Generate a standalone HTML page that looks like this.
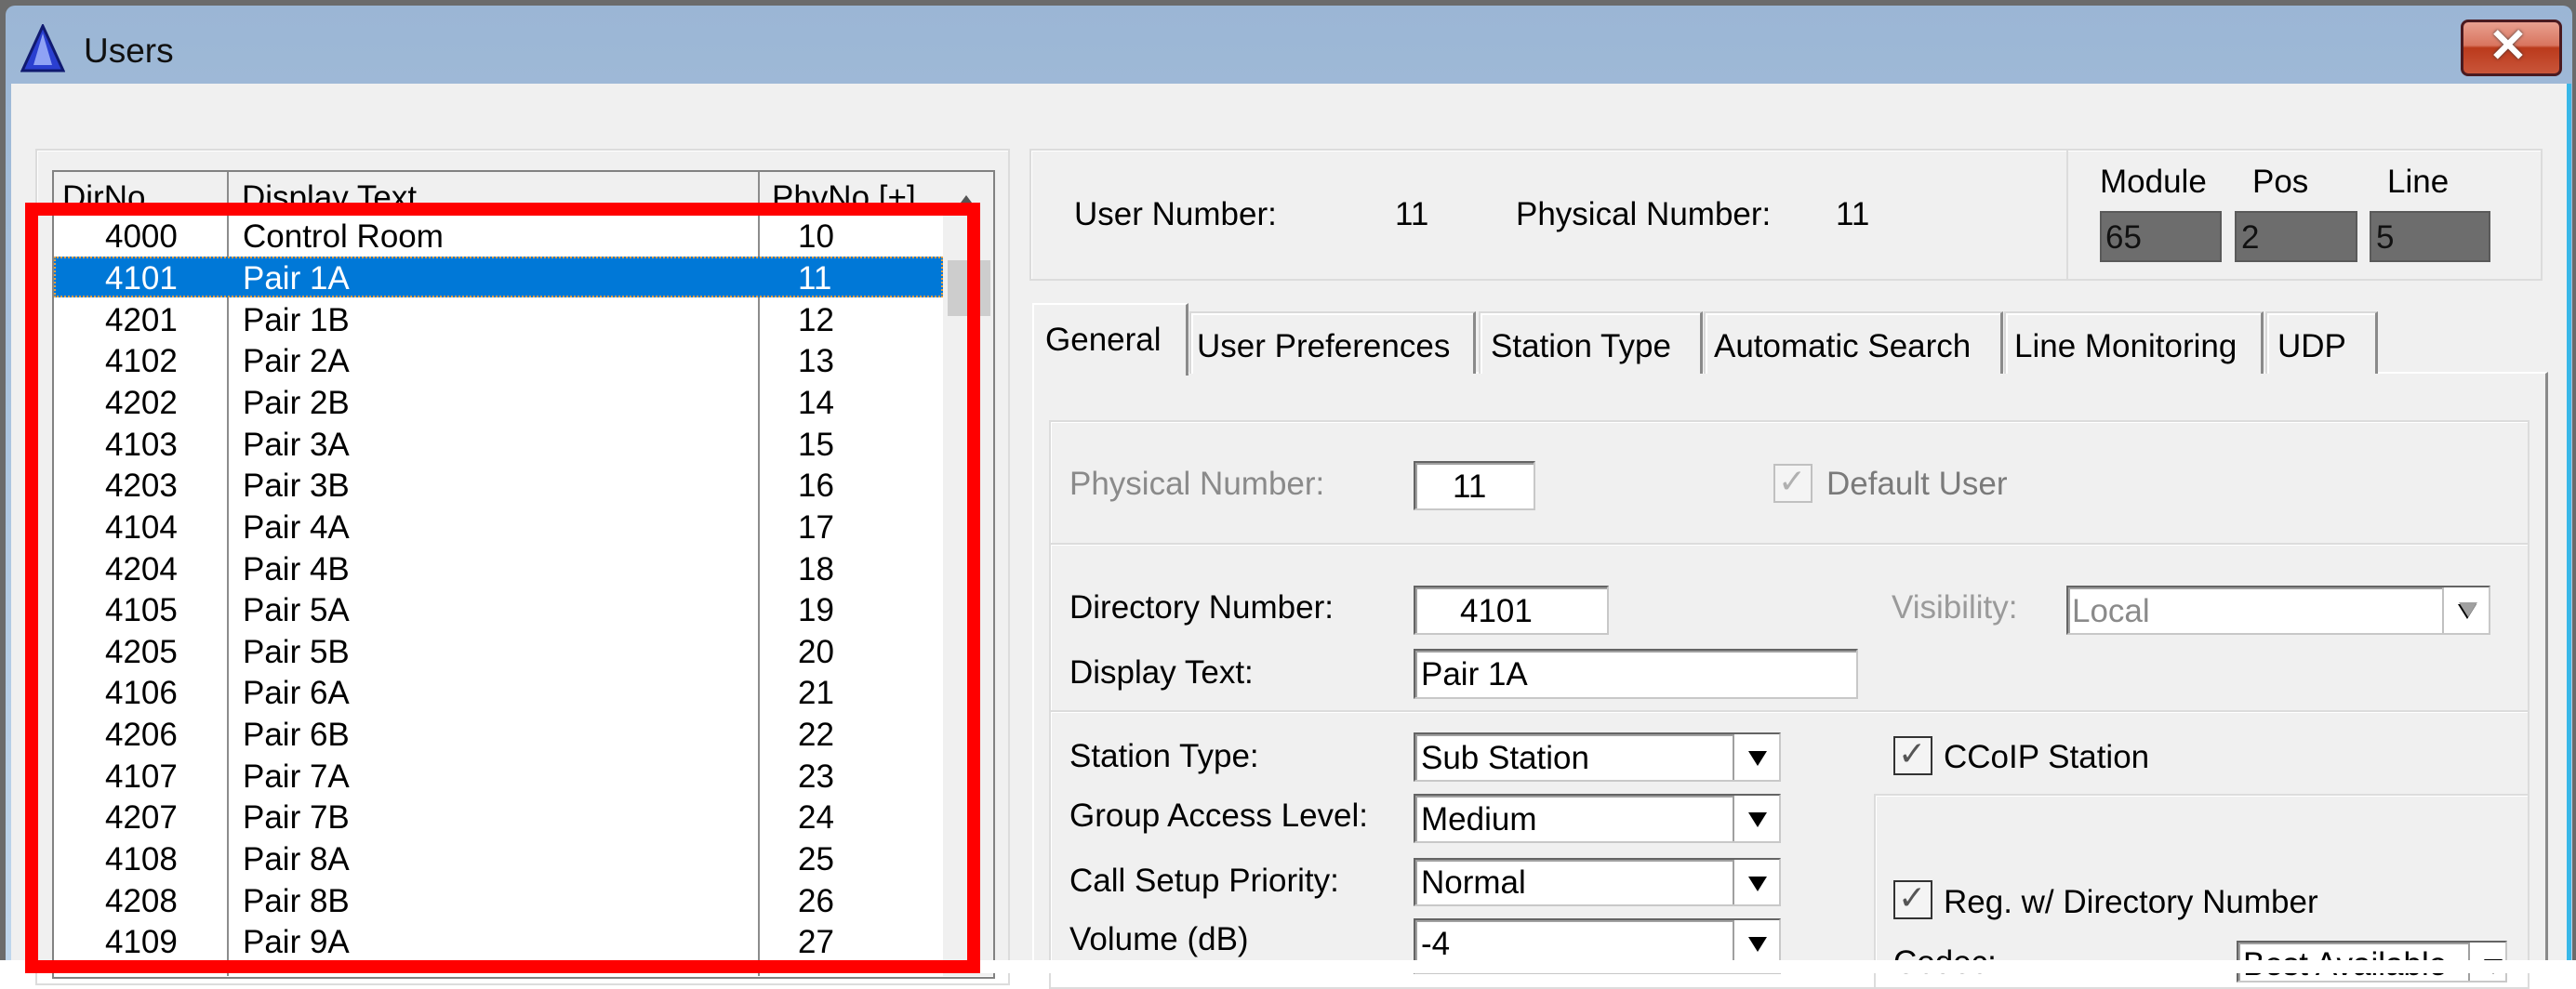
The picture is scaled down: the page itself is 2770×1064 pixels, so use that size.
<!DOCTYPE html>
<html><head><meta charset="utf-8"><style>
*{margin:0;padding:0;box-sizing:border-box}
body{width:2770px;height:1047px;position:relative;overflow:hidden;background:#fff;font-family:"Liberation Sans",sans-serif;font-size:35px;color:#000}
.a{position:absolute}
.t{position:absolute;white-space:nowrap;line-height:1}
.gb{position:absolute;border:2px solid #dcdcdc;box-shadow:inset 1px 1px 0 #fff}
.box{position:absolute;background:#fff;border:2px solid #646464;border-right-color:#c8c8c8;border-bottom-color:#c8c8c8;box-shadow:inset 2px 2px 0 #a0a0a0}
.arr{position:absolute;top:0;bottom:0;right:0;width:50px;border-left:2px solid #a0a0a0;background:#fff}
.arr:after{content:"";position:absolute;left:15px;top:18px;border-left:10px solid transparent;border-right:10px solid transparent;border-top:16px solid #000}
.chk{position:absolute;width:42px;height:42px;border:2px solid #333;background:#f4f4f4}
.tab{position:absolute;top:335px;height:67px;border:2px solid #d9d9d9;border-bottom:none;border-right:3px solid #8a8a8a;background:#f0f0f0;box-shadow:inset 2px 2px 0 #fff}
.row{position:absolute;left:58px;width:956px;height:45px}
.row span{position:absolute;top:6px;line-height:1}
.row span:nth-child(3){left:800px!important}
</style></head><body>
<div class="a" style="left:0;top:0;width:2770px;height:1033px;background:#6b6b6b"></div>
<div class="a" style="left:6px;top:6px;width:2760px;height:1027px;background:linear-gradient(#9bb6d5,#bfd6ec);border-radius:10px 10px 0 0"></div>
<div class="a" style="left:12px;top:90px;width:2752px;height:943px;background:#f0f0f0"></div>
<div class="a" style="left:2760px;top:90px;width:5px;height:943px;background:#38b8e8"></div>
<svg class="a" style="left:22px;top:26px" width="48" height="54"><polygon points="24,2 46,50 2,50" fill="#2a3fd0" stroke="#101a70" stroke-width="3"/><polygon points="24,10 34,44 14,44" fill="#8fa2f5"/></svg>
<div class="t" style="left:90px;top:36px;font-size:37px;color:#111">Users</div>
<div class="a" style="left:2646px;top:21px;width:109px;height:61px;border:3px solid #4a1a20;border-radius:8px;background:linear-gradient(#e8a090 0%,#d9755f 45%,#bb3a1c 50%,#c9553a 100%)"></div>
<div class="t" style="left:2676px;top:24px;font-size:50px;font-weight:bold;color:#fff;text-shadow:0 0 3px #333">✕</div>
<div class="gb" style="left:38px;top:160px;width:1048px;height:900px"></div>
<div class="a" style="left:56px;top:183px;width:1014px;height:870px;background:#fff;border:2px solid #828282"></div>
<div class="a" style="left:58px;top:185px;width:1010px;height:45px;background:#f0f0f0"></div>
<div class="a" style="left:1014px;top:230px;width:54px;height:820px;background:#f0f0f0"></div>
<div class="a" style="left:1019px;top:280px;width:46px;height:60px;background:#cdcdcd"></div>
<div class="t" style="left:67px;top:195px">DirNo</div>
<div class="t" style="left:260px;top:195px">Display Text</div>
<div class="t" style="left:830px;top:195px">PhyNo [+]</div>
<div class="a" style="left:1030px;top:210px;border-left:9px solid transparent;border-right:9px solid transparent;border-bottom:12px solid #555"></div>
<div class="a" style="left:244px;top:185px;width:2px;height:865px;background:#8c8c8c"></div>
<div class="a" style="left:815px;top:185px;width:2px;height:865px;background:#8c8c8c"></div>
<div class="a" style="left:58px;top:276px;width:956px;height:44px;background:#0078d7;border:2px dotted #e8a040"></div>
<div class="row" style="top:231px"><span style="left:55px">4000</span><span style="left:203px">Control Room</span><span>10</span></div>
<div class="row" style="top:276px;color:#fff"><span style="left:55px">4101</span><span style="left:203px">Pair 1A</span><span>11</span></div>
<div class="row" style="top:321px"><span style="left:55px">4201</span><span style="left:203px">Pair 1B</span><span>12</span></div>
<div class="row" style="top:365px"><span style="left:55px">4102</span><span style="left:203px">Pair 2A</span><span>13</span></div>
<div class="row" style="top:410px"><span style="left:55px">4202</span><span style="left:203px">Pair 2B</span><span>14</span></div>
<div class="row" style="top:455px"><span style="left:55px">4103</span><span style="left:203px">Pair 3A</span><span>15</span></div>
<div class="row" style="top:499px"><span style="left:55px">4203</span><span style="left:203px">Pair 3B</span><span>16</span></div>
<div class="row" style="top:544px"><span style="left:55px">4104</span><span style="left:203px">Pair 4A</span><span>17</span></div>
<div class="row" style="top:589px"><span style="left:55px">4204</span><span style="left:203px">Pair 4B</span><span>18</span></div>
<div class="row" style="top:633px"><span style="left:55px">4105</span><span style="left:203px">Pair 5A</span><span>19</span></div>
<div class="row" style="top:678px"><span style="left:55px">4205</span><span style="left:203px">Pair 5B</span><span>20</span></div>
<div class="row" style="top:722px"><span style="left:55px">4106</span><span style="left:203px">Pair 6A</span><span>21</span></div>
<div class="row" style="top:767px"><span style="left:55px">4206</span><span style="left:203px">Pair 6B</span><span>22</span></div>
<div class="row" style="top:812px"><span style="left:55px">4107</span><span style="left:203px">Pair 7A</span><span>23</span></div>
<div class="row" style="top:856px"><span style="left:55px">4207</span><span style="left:203px">Pair 7B</span><span>24</span></div>
<div class="row" style="top:901px"><span style="left:55px">4108</span><span style="left:203px">Pair 8A</span><span>25</span></div>
<div class="row" style="top:946px"><span style="left:55px">4208</span><span style="left:203px">Pair 8B</span><span>26</span></div>
<div class="row" style="top:990px"><span style="left:55px">4109</span><span style="left:203px">Pair 9A</span><span>27</span></div>
<div class="gb" style="left:1107px;top:160px;width:1627px;height:142px"></div>
<div class="a" style="left:2222px;top:162px;width:2px;height:138px;background:#dcdcdc"></div>
<div class="t" style="left:1155px;top:213px">User Number:</div>
<div class="t" style="left:1500px;top:213px">11</div>
<div class="t" style="left:1630px;top:213px">Physical Number:</div>
<div class="t" style="left:1974px;top:213px">11</div>
<div class="t" style="left:2258px;top:178px">Module</div>
<div class="t" style="left:2422px;top:178px">Pos</div>
<div class="t" style="left:2567px;top:178px">Line</div>
<div class="a" style="left:2258px;top:227px;width:131px;height:55px;background:#6d6d6d;border:2px solid #5a5a5a"></div>
<div class="a" style="left:2403px;top:227px;width:132px;height:55px;background:#6d6d6d;border:2px solid #5a5a5a"></div>
<div class="a" style="left:2548px;top:227px;width:130px;height:55px;background:#6d6d6d;border:2px solid #5a5a5a"></div>
<div class="t" style="left:2264px;top:238px;color:#111">65</div>
<div class="t" style="left:2410px;top:238px;color:#111">2</div>
<div class="t" style="left:2555px;top:238px;color:#111">5</div>
<div class="a" style="left:1110px;top:400px;width:1630px;height:640px;border:2px solid #fff;border-right:3px solid #8a8a8a;border-bottom:none"></div>
<div class="tab" style="left:1279px;width:308px"></div>
<div class="tab" style="left:1590px;width:241px"></div>
<div class="tab" style="left:1832px;width:322px"></div>
<div class="tab" style="left:2155px;width:279px"></div>
<div class="tab" style="left:2436px;width:121px"></div>
<div class="a" style="left:1110px;top:326px;width:168px;height:78px;background:#f0f0f0;border:2px solid #fff;border-right:3px solid #8a8a8a;border-bottom:none"></div>
<div class="t" style="left:1124px;top:348px">General</div>
<div class="t" style="left:1287px;top:355px">User Preferences</div>
<div class="t" style="left:1603px;top:355px">Station Type</div>
<div class="t" style="left:1843px;top:355px">Automatic Search</div>
<div class="t" style="left:2166px;top:355px">Line Monitoring</div>
<div class="t" style="left:2449px;top:355px">UDP</div>
<div class="gb" style="left:1128px;top:452px;width:1592px;height:134px"></div>
<div class="gb" style="left:1128px;top:584px;width:1592px;height:182px"></div>
<div class="gb" style="left:1128px;top:764px;width:1592px;height:300px"></div>
<div class="gb" style="left:2015px;top:854px;width:705px;height:210px"></div>
<div class="t" style="left:1150px;top:503px;color:#8a8a8a">Physical Number:</div>
<div class="box" style="left:1520px;top:496px;width:131px;height:53px"></div>
<div class="t" style="left:1562px;top:506px">11</div>
<div class="chk" style="left:1907px;top:499px;border-color:#c0c0c0"></div>
<div class="t" style="left:1912px;top:500px;color:#b0b0b0;font-size:36px">✓</div>
<div class="t" style="left:1964px;top:503px;color:#7a7a7a">Default User</div>
<div class="t" style="left:1150px;top:636px">Directory Number:</div>
<div class="box" style="left:1520px;top:630px;width:210px;height:53px"></div>
<div class="t" style="left:1570px;top:640px">4101</div>
<div class="t" style="left:2034px;top:636px;color:#9a9a9a">Visibility:</div>
<div class="box" style="left:2222px;top:630px;width:456px;height:53px"><div class="arr" style="border-left-color:#c0c0c0"></div></div>
<div class="a" style="left:2644px;top:648px;border-left:10px solid transparent;border-right:10px solid transparent;border-top:16px solid #a0a0a0"></div>
<div class="t" style="left:2228px;top:640px;color:#8a8a8a">Local</div>
<div class="t" style="left:1150px;top:706px">Display Text:</div>
<div class="box" style="left:1520px;top:698px;width:478px;height:54px"></div>
<div class="t" style="left:1528px;top:708px">Pair 1A</div>
<div class="t" style="left:1150px;top:796px">Station Type:</div>
<div class="box" style="left:1520px;top:788px;width:395px;height:53px"><div class="arr"></div></div>
<div class="t" style="left:1528px;top:798px">Sub Station</div>
<div class="t" style="left:1150px;top:860px">Group Access Level:</div>
<div class="box" style="left:1520px;top:854px;width:395px;height:53px"><div class="arr"></div></div>
<div class="t" style="left:1528px;top:864px">Medium</div>
<div class="t" style="left:1150px;top:930px">Call Setup Priority:</div>
<div class="box" style="left:1520px;top:923px;width:395px;height:52px"><div class="arr"></div></div>
<div class="t" style="left:1528px;top:932px">Normal</div>
<div class="t" style="left:1150px;top:993px">Volume (dB)</div>
<div class="box" style="left:1520px;top:988px;width:395px;height:60px"><div class="arr"></div></div>
<div class="t" style="left:1528px;top:998px">-4</div>
<div class="chk" style="left:2036px;top:792px"></div>
<div class="t" style="left:2041px;top:793px;color:#555;font-size:36px">✓</div>
<div class="t" style="left:2090px;top:797px">CCoIP Station</div>
<div class="chk" style="left:2036px;top:947px"></div>
<div class="t" style="left:2041px;top:948px;color:#555;font-size:36px">✓</div>
<div class="t" style="left:2090px;top:953px">Reg. w/ Directory Number</div>
<div class="t" style="left:2036px;top:1018px">Codec:</div>
<div class="box" style="left:2405px;top:1012px;width:291px;height:45px"><div class="arr" style="width:40px"></div></div>
<div class="t" style="left:2412px;top:1020px">Best Available</div>
<div class="a" style="left:0;top:1033px;width:2770px;height:14px;background:#fff"></div>
<div class="a" style="left:27px;top:218px;width:1027px;height:829px;border:14px solid #f00"></div>
</body></html>
